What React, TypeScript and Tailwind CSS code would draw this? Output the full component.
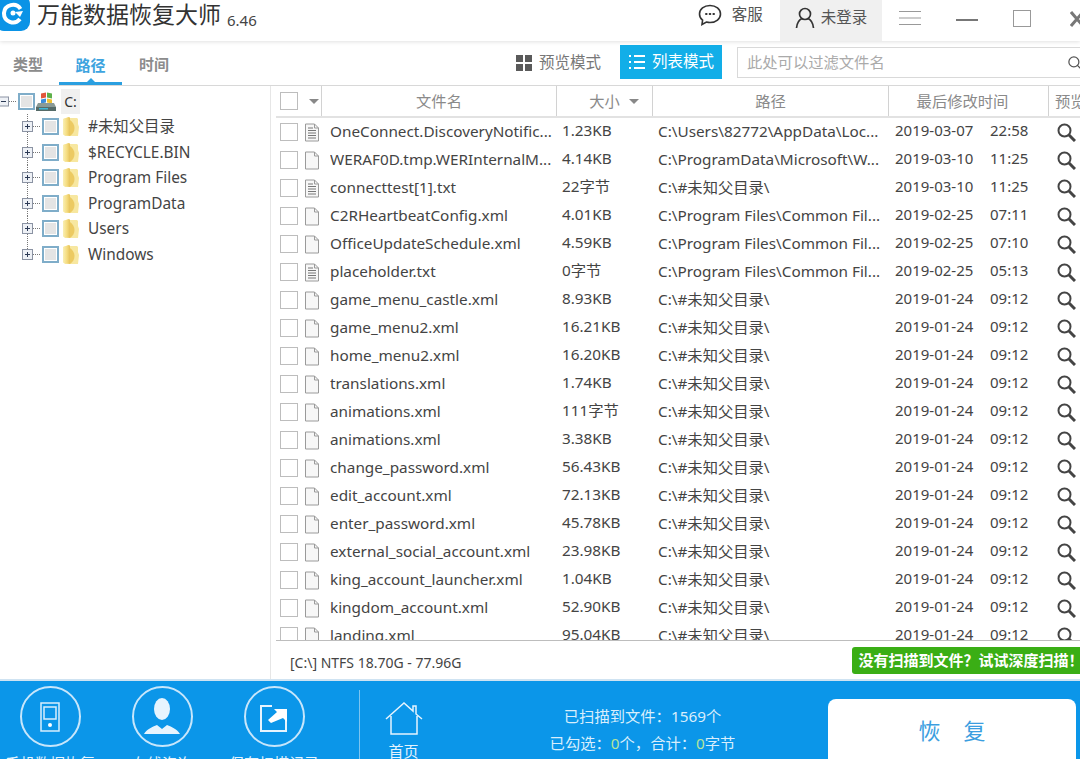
import { Search } from 'lucide-react';

const FONT = 'font-["Noto_Sans","Noto_Sans_CJK_SC",sans-serif]';
const UNKNOWN = 'C:\\#未知父目录\\';

type Row = { name: string; size: string; path: string; date: string; time: string; lines?: boolean };

const rows: Row[] = [
    { name: 'OneConnect.DiscoveryNotific...', size: '1.23KB', path: 'C:\\Users\\82772\\AppData\\Loc...', date: '2019-03-07', time: '22:58', lines: true },
    { name: 'WERAF0D.tmp.WERInternalM...', size: '4.14KB', path: 'C:\\ProgramData\\Microsoft\\W...', date: '2019-03-10', time: '11:25' },
    { name: 'connecttest[1].txt', size: '22字节', path: UNKNOWN, date: '2019-03-10', time: '11:25', lines: true },
    { name: 'C2RHeartbeatConfig.xml', size: '4.01KB', path: 'C:\\Program Files\\Common Fil...', date: '2019-02-25', time: '07:11' },
    { name: 'OfficeUpdateSchedule.xml', size: '4.59KB', path: 'C:\\Program Files\\Common Fil...', date: '2019-02-25', time: '07:10' },
    { name: 'placeholder.txt', size: '0字节', path: 'C:\\Program Files\\Common Fil...', date: '2019-02-25', time: '05:13', lines: true },
    { name: 'game_menu_castle.xml', size: '8.93KB', path: UNKNOWN, date: '2019-01-24', time: '09:12' },
    { name: 'game_menu2.xml', size: '16.21KB', path: UNKNOWN, date: '2019-01-24', time: '09:12' },
    { name: 'home_menu2.xml', size: '16.20KB', path: UNKNOWN, date: '2019-01-24', time: '09:12' },
    { name: 'translations.xml', size: '1.74KB', path: UNKNOWN, date: '2019-01-24', time: '09:12' },
    { name: 'animations.xml', size: '111字节', path: UNKNOWN, date: '2019-01-24', time: '09:12' },
    { name: 'animations.xml', size: '3.38KB', path: UNKNOWN, date: '2019-01-24', time: '09:12' },
    { name: 'change_password.xml', size: '56.43KB', path: UNKNOWN, date: '2019-01-24', time: '09:12' },
    { name: 'edit_account.xml', size: '72.13KB', path: UNKNOWN, date: '2019-01-24', time: '09:12' },
    { name: 'enter_password.xml', size: '45.78KB', path: UNKNOWN, date: '2019-01-24', time: '09:12' },
    { name: 'external_social_account.xml', size: '23.98KB', path: UNKNOWN, date: '2019-01-24', time: '09:12' },
    { name: 'king_account_launcher.xml', size: '1.04KB', path: UNKNOWN, date: '2019-01-24', time: '09:12' },
    { name: 'kingdom_account.xml', size: '52.90KB', path: UNKNOWN, date: '2019-01-24', time: '09:12' },
    { name: 'landing.xml', size: '95.04KB', path: UNKNOWN, date: '2019-01-24', time: '09:12' },
];

const treeItems = ['#未知父目录', '$RECYCLE.BIN', 'Program Files', 'ProgramData', 'Users', 'Windows'];

const FileIcon = ({ lines }: { lines?: boolean }) => (
    <svg width="16" height="19" viewBox="0 0 16 19" fill="none" className="shrink-0">
        <path d="M1.5 1h9l4 4v13h-13z" fill="#f7f7f7" stroke="#9a9a9a" />
        <path d="M10.5 1v4h4" stroke="#9a9a9a" />
        {lines && <path d="M4 5h5M4 7.5h8M4 10h8M4 12.500h8M4 15h8" stroke="#777" />}
    </svg>
);

const Folder = () => (
    <svg width="18" height="21" viewBox="0 0 18 21" className="shrink-0">
        <defs>
            <linearGradient id="fold" x1="0" x2="1" y1="0" y2="0">
                <stop offset="0" stopColor="#f9efb4" />
                <stop offset="0.55" stopColor="#f5dc80" />
                <stop offset="1" stopColor="#e6c25a" />
            </linearGradient>
        </defs>
        <path d="M1 3l6-2 1 1h7l1 1v5l1 3-1 9H3l-1-1-1-1z" fill="#f7e7a0" />
        <path d="M1 3l6-2 1 1v18l-6-1-1-1z" fill="url(#fold)" />
        <path d="M8 4c3 2 4.500 5 4.500 8S11 18 8 20z" fill="#ecca62" />
    </svg>
);

const DriveIcon = () => (
    <svg width="22" height="20" viewBox="0 0 22 20" className="shrink-0">
        <path d="M6 1.500l5-1v5l-5 1z" fill="#e2563b" />
        <path d="M12 .5l5 1v5l-5-1z" fill="#5db04a" />
        <path d="M6 7.500l5-1v4l-5 1z" fill="#3c8ddb" />
        <path d="M12 6.500l5 1v4l-5-1z" fill="#efc132" />
        <path d="M3 11h16l2 4v4H1v-4z" fill="#8a9a96" />
        <path d="M1 15h20v4H1z" fill="#566b68" />
        <rect x="4" y="16" width="9" height="1.500" fill="#3fb8d8" />
    </svg>
);

const TreeCheck = () => (
    <span className="block w-[17px] h-[17px] shrink-0 border-2 border-[#7fadc9] bg-[#e4e4e4] shadow-[inset_0_0_0_1px_#fff]" />
);

const Tick = () => <span className="block w-[18px] h-[18px] shrink-0 border border-[#bdbdbd] bg-white" />;

// the dotted connector with its plus box
const TreeBranch = ({ last }: { last: boolean }) => (
    <svg width="42" height="25.500" viewBox="0 0 42 25.500" className="shrink-0">
        <path d={last ? 'M27.500 0v12.500' : 'M27.500 0v25.500'} stroke="#777" strokeDasharray="1 1" />
        <path d="M33 12.500h8" stroke="#777" strokeDasharray="1 1" />
        <rect x="22.500" y="7.500" width="10" height="10" fill="#eef1f6" stroke="#8b93a3" />
        <path d="M25 12.500h5M27.500 10v5" stroke="#2c3a55" />
    </svg>
);

const Circle = ({ children, label }: { children: React.ReactNode; label: string }) => (
    <div className="w-[112px] flex flex-col items-center shrink-0">
        <div className="w-[61px] h-[61px] shrink-0 rounded-full border-[2px] border-[#c7e6fb] flex items-center justify-center overflow-hidden">{children}</div>
        <span className="mt-[6px] shrink-0 text-[15px] leading-5 text-[#e4f3fd] whitespace-nowrap">{label}</span>
    </div>
);

const Head = ({ children, className = '' }: { children: React.ReactNode; className?: string }) => (
    <div className={`flex items-center justify-center border-r border-[#d2d2d2] text-[15.300px] text-[#8a8a8a] whitespace-nowrap ${className}`}>{children}</div>
);

export default function App() {
    return (
        <div className={`${FONT} w-[1080px] h-[759px] overflow-hidden bg-white flex flex-col text-[#444]`}>
            {/* title bar */}
            <header className="h-[41px] shrink-0 flex items-center shadow-[0_1px_4px_rgba(0,0,0,0.12)] relative z-10 bg-white">
                <div className="w-[35px] h-[36px] -mt-[15px] -ml-[5px] rounded-[9px] bg-[#0a93e6] flex items-center justify-center shrink-0">
                    <svg width="24" height="24" viewBox="0 0 24 24" fill="none">
                        <path d="M19.500 8A9 9 0 0 0 3 12a9 9 0 0 0 16 6" stroke="#fff" strokeWidth="4" />
                        <circle cx="12" cy="12" r="2.500" fill="#fff" />
                        <path d="M14 11l8-1-3 6z" fill="#fff" />
                    </svg>
                </div>
                <span className="ml-[7px] -mt-[12px] text-[23px] leading-none text-[#333] whitespace-nowrap">万能数据恢复大师</span>
                <span className="ml-[6px] -mt-[1px] text-[15px] leading-none text-[#444]">6.46</span>
                <div className="ml-[441px] -mt-[11px] flex items-center shrink-0">
                    <svg width="24" height="22" viewBox="0 0 24 22" fill="none" stroke="#333" strokeWidth="1.600">
                        <path d="M12 1.500c6 0 10.500 3.800 10.500 8.500s-4.500 8.500-10.500 8.500c-1.300 0-2.500-.2-3.600-.5L4 20.500l.6-4.300C2.600 14.700 1.500 12.500 1.500 10 1.500 5.300 6 1.500 12 1.500z" />
                        <path d="M8 10h.6M11.700 10h.6M15.400 10h.6" strokeWidth="2" strokeLinecap="round" />
                    </svg>
                    <span className="ml-[10px] w-[48px] text-[15.500px] text-[#555] whitespace-nowrap">客服</span>
                </div>
                <div className="w-[102px] h-[41px] bg-[#f0f0f0] flex items-center pl-[15px] pb-[5px] shrink-0">
                    <svg width="20" height="22" viewBox="0 0 20 22" fill="none" stroke="#333" strokeWidth="1.700">
                        <circle cx="10" cy="7" r="5.500" />
                        <path d="M1.500 21c.5-5 3.200-8.500 5.500-9.500M18.500 21c-.5-5-3.200-8.500-5.500-9.500" />
                    </svg>
                    <span className="ml-[6px] text-[15.500px] text-[#555] whitespace-nowrap">未登录</span>
                </div>
                <svg width="22" height="14" viewBox="0 0 22 14" stroke="#999" className="ml-[17px] -mt-[6px] shrink-0">
                    <path d="M0 .5h22M0 7h22M0 13.500h22" />
                </svg>
                <span className="block ml-[35px] -mt-[2px] w-[22px] h-[2px] bg-[#777] shrink-0" />
                <span className="block ml-[35px] -mt-[4px] w-[18px] h-[17px] border border-[#999] shrink-0" />
                <svg width="14" height="16" viewBox="0 0 14 16" stroke="#777" strokeWidth="3" className="ml-[39px] -mt-[3px] shrink-0">
                    <path d="M1 1l12 14M13 1L1 15" />
                </svg>
            </header>

            {/* tabs + filter */}
            <div className="h-[45px] shrink-0 flex items-center border-b border-[#d8d8d8]">
                <div className="w-[59px] shrink-0 text-center text-[15px] font-bold text-[#8c8c8c] pr-[3px] pt-[3px]">类型</div>
                <div className="w-[63px] h-[44px] shrink-0 border-b-[3px] border-[#2a9fe0] flex flex-col items-center text-[15px] leading-5 font-bold text-[#3ea4df] pt-[14px]">
                    路径
                    <span className="mt-auto w-0 h-0 border-x-[4px] border-x-transparent border-b-[4px] border-b-[#2a9fe0]" />
                </div>
                <div className="w-[64px] text-center text-[15px] font-bold text-[#8c8c8c] pt-[3px] shrink-0">时间</div>
                <svg width="16" height="16" viewBox="0 0 16 16" fill="#5a5a5a" className="ml-[330px] shrink-0">
                    <path d="M0 0h7v7H0zM9 0h7v7H9zM0 9h7v7H0zM9 9h7v7H9z" />
                </svg>
                <span className="ml-[7px] text-[15.500px] text-[#777] whitespace-nowrap">预览模式</span>
                <div className="ml-[19px] w-[102px] h-[34px] -mt-[2px] bg-[#12aee8] flex items-center pl-[9px] shrink-0">
                    <svg width="16" height="16" viewBox="0 0 16 16" stroke="#fff" strokeWidth="2" className="shrink-0">
                        <path d="M0 2h2M0 8h2M0 14h2M5 2h11M5 8h11M5 14h11" />
                    </svg>
                    <span className="ml-[7px] text-[15.500px] text-white whitespace-nowrap">列表模式</span>
                </div>
                <div className="ml-[15px] w-[360px] h-[31px] -mt-[2px] border border-[#d9d9d9] flex items-center pl-[9px] shrink-0">
                    <span className="text-[15.300px] text-[#aaa] whitespace-nowrap">此处可以过滤文件名</span>
                    <Search size={15} color="#555" className="ml-[182px] shrink-0" />
                </div>
            </div>

            {/* middle */}
            <div className="h-[593px] shrink-0 flex">
                <aside className="w-[271px] shrink-0 border-r border-[#e6e6e6] pt-[3px]">
                    <div className="h-[25px] flex items-center">
                        <svg width="19" height="25" viewBox="0 0 19 25" className="-ml-[1px] shrink-0">
                            <rect x="0.500" y="8" width="9" height="9" fill="#eef1f6" stroke="#8b93a3" />
                            <path d="M2 12.500h5" stroke="#2c3a55" />
                            <path d="M10 12.500h8" stroke="#777" strokeDasharray="1 1" />
                        </svg>
                        <TreeCheck />
                        <DriveIcon />
                        <span className="ml-[4px] h-[25px] w-[19px] bg-[#f0f0f0] text-[14px] leading-[25px] text-center text-[#333]">C:</span>
                    </div>
                    {treeItems.map((t, i) => (
                        <div key={t} className="h-[25.5px] flex items-center">
                            <TreeBranch last={i === treeItems.length - 1} />
                            <TreeCheck />
                            <span className="ml-[3px]"><Folder /></span>
                            <span className="ml-[8px] text-[15.400px] text-[#444] whitespace-nowrap">{t}</span>
                        </div>
                    ))}
                </aside>

                <section className="flex-1 min-w-0 flex flex-col">
                    <div className="h-[32px] shrink-0 flex border-b-2 border-[#e2e2e2] ml-[5px] w-[820px]">
                        <Head className="w-[46px] justify-start! pl-[4px] shrink-0">
                            <Tick />
                            <span className="ml-[11px] w-0 h-0 border-x-[5px] border-x-transparent border-t-[5px] border-t-[#888]" />
                        </Head>
                        <Head className="w-[235px] shrink-0">文件名</Head>
                        <Head className="w-[96px] shrink-0 pl-[19px]">大小<span className="ml-[9px] w-0 h-0 border-x-[5px] border-x-transparent border-t-[5px] border-t-[#888]" /></Head>
                        <Head className="w-[236px] shrink-0">路径</Head>
                        <Head className="w-[160px] shrink-0 pr-[12px]">最后修改时间</Head>
                        <div className="flex items-center pl-[6px] text-[15.300px] text-[#8a8a8a] whitespace-nowrap">预览</div>
                    </div>
                    <div className="h-[523px] shrink-0 overflow-hidden border-b border-[#bdbdbd] ml-[5px]">
                        {rows.map((r, i) => (
                            <div key={i} className="h-[28px] flex items-center text-[15.300px] text-[#444] whitespace-nowrap">
                                <span className="ml-[4px]"><Tick /></span>
                                <span className="ml-[6px]"><FileIcon lines={r.lines} /></span>
                                <span className="ml-[10px] mb-[1px] w-[232px] shrink-0 overflow-hidden">{r.name}</span>
                                <span className="mb-[3px] w-[96px] shrink-0">{r.size}</span>
                                <span className="mb-[1px] w-[237px] shrink-0 overflow-hidden">{r.path}</span>
                                <span className="mb-[3px] w-[95px] shrink-0 text-[15px]">{r.date}</span>
                                <span className="mb-[3px] w-[67px] shrink-0 text-[15px]">{r.time}</span>
                                <svg width="19" height="19" viewBox="0 0 19 19" fill="none" stroke="#444" className="shrink-0">
                                    <circle cx="7.500" cy="7.500" r="6" strokeWidth="2" />
                                    <path d="M12 12l6 6" strokeWidth="3" />
                                </svg>
                            </div>
                        ))}
                    </div>
                    <div className="flex-1 flex items-center min-h-0">
                        <span className="ml-[19px] mt-[5px] text-[14px] text-[#444] whitespace-nowrap">[C:\] NTFS 18.70G - 77.96G</span>
                        <div className="ml-[391px] w-[240px] h-[27px] shrink-0 bg-[#3aae15] rounded-l-[3px] flex items-center pl-[6px] text-[15px] font-bold text-white whitespace-nowrap">
                            没有扫描到文件？试试深度扫描！
                        </div>
                    </div>
                </section>
            </div>

            {/* bottom bar */}
            <footer className="flex-1 min-h-0 bg-[#0b96e9] border-t-2 border-[#cfe3f2] flex text-white">
                <div className="flex pt-[5px] -ml-[6px] shrink-0">
                    <Circle label="手机数据恢复">
                        <svg width="20" height="30" viewBox="0 0 20 30" fill="none" stroke="#d8eefd" strokeWidth="1.500">
                            <rect x="1" y="1" width="18" height="28" />
                            <rect x="4" y="5" width="12" height="12" />
                            <circle cx="10" cy="23" r="2" fill="#fff" stroke="none" />
                        </svg>
                    </Circle>
                    <Circle label="在线咨询">
                        <svg width="40" height="38" viewBox="0 0 40 38" fill="#e6f4fe" className="shrink-0">
                            <ellipse cx="20" cy="11" rx="8" ry="11" />
                            <path d="M2 36c3-5 8-7 13-9l5 4 5-4c5 2 10 4 13 9z" />
                        </svg>
                    </Circle>
                    <Circle label="保存扫描记录">
                        <svg width="30" height="30" viewBox="0 0 30 30" fill="none" stroke="#e6f4fe">
                            <path d="M13 4H2v25h25V17" strokeWidth="2" />
                            <path d="M12 21l-3-3 9-8-3-3h13v13l-4-4z" fill="#fff" stroke="none" />
                        </svg>
                    </Circle>
                </div>
                <div className="ml-[29px] mt-[9px] w-px bg-[#7cc4f0] shrink-0" />
                <div className="w-[87px] shrink-0 flex flex-col items-center pt-[21px]">
                    <svg width="38" height="33" viewBox="0 0 38 33" fill="none" stroke="#e6f4fe" strokeWidth="1.500" className="shrink-0">
                        <path d="M1 17L19 1l9 8V4h3v8l6 5M6 14v18h26V14" />
                    </svg>
                    <span className="mt-[6px] shrink-0 text-[15px] leading-5 text-[#e4f3fd]">首页</span>
                </div>
                <div className="w-[285px] ml-[53px] shrink-0 flex flex-col items-center pt-[22px] text-[15.300px] leading-[27px] text-[#d9eefc] whitespace-nowrap">
                    <div>已扫描到文件：1569个</div>
                    <div>已勾选：<span className="text-[#b7e59a]">0</span>个，合计：<span className="text-[#b7e59a]">0</span>字节</div>
                </div>
                <div className="ml-[43px] mt-[18px] w-[248px] h-[80px] shrink-0 bg-white rounded-[8px] flex justify-center pt-[15px] text-[22px] leading-8 text-[#3b9ee0] whitespace-pre">
                    恢{'    '}复
                </div>
            </footer>
        </div>
    );
}
